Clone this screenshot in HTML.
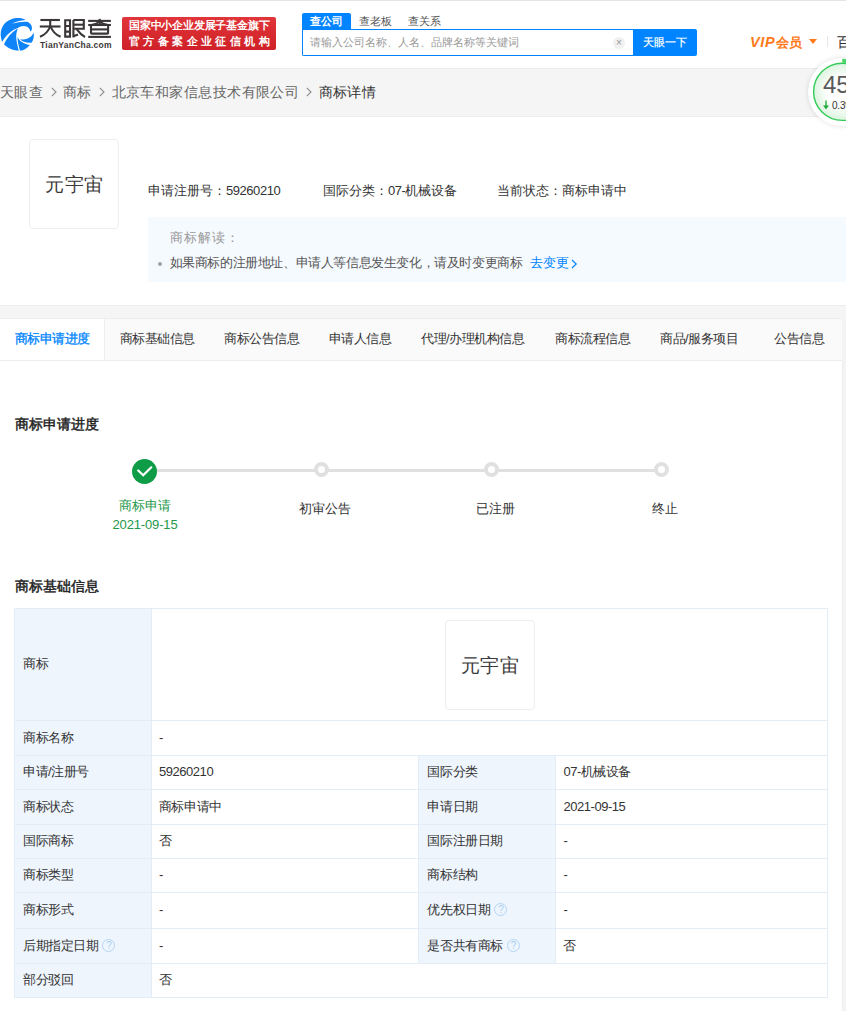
<!DOCTYPE html>
<html><head><meta charset="utf-8">
<style>
*{margin:0;padding:0;box-sizing:border-box}
html,body{width:846px;height:1011px;overflow:hidden;background:#fff}
body{font-family:"Liberation Sans",sans-serif;color:#333;position:relative}
.abs{position:absolute;white-space:nowrap}
#topline{position:absolute;left:0;top:0;width:846px;height:1px;background:#e4e4e4}
#crumb{position:absolute;left:0;top:68px;width:846px;height:49px;background:#f5f5f5;border-top:1px solid #ececec;border-bottom:1px solid #ececec}
#gap{position:absolute;left:0;top:305px;width:846px;height:13px;background:#f5f5f5;border-top:1px solid #ececec}

#tbl td{border:1px solid #e2edf7;padding:0 0 1px 8px;vertical-align:middle;line-height:16px;letter-spacing:-0.45px}
#tbl td.v{padding-left:7px}
#tbl td.l{background:#eef5fd}
#tbl i.q{display:inline-block;width:13px;height:13px;border:1px solid #b5d5f3;border-radius:50%;color:#a9cdf0;font-style:normal;font-size:10px;line-height:11px;text-align:center;vertical-align:1px;margin-left:1px;letter-spacing:0}
.tab{color:#333}
.d{letter-spacing:-0.45px}
</style></head><body>
<div id="topline"></div>

<!-- logo -->
<svg class="abs" style="left:0;top:15px" width="36" height="38" viewBox="0 0 846 893">
  <g fill="#0f84f8">
  <path d="M55,630 C0,520 -10,330 110,200 C230,70 470,30 600,118 C480,128 350,160 280,205 C400,170 540,150 640,160 C720,190 770,270 745,345 C737,368 725,380 712,385 C705,320 650,262 560,258 C505,256 465,275 430,298 C290,350 140,460 55,630 Z"/>
  <path d="M95,685 C170,520 290,390 420,318 C392,385 375,470 382,545 C392,660 422,760 440,840 C330,830 180,790 95,685 Z"/>
  <path d="M412,505 C440,600 540,675 700,705 C640,785 560,830 472,842 C440,740 410,620 412,505 Z"/>
  <path d="M470,565 C580,600 720,560 792,420 C805,510 785,600 740,652 C620,660 520,630 470,565 Z"/>
  </g>
</svg>
<svg class="abs" id="logotxt" style="left:0;top:0" width="120" height="45" viewBox="0 0 120 45">
<g fill="none" stroke="#3b3637" stroke-width="2.1" stroke-linecap="butt">
<path d="M40.4,20 H59.9"/>
<path d="M39.8,26.5 H60.5"/>
<path d="M50.2,20 V26.5"/>
<path d="M50.2,26.5 C48.5,31 45,34.8 40,36.8"/>
<path d="M50.6,26.5 C52.3,31 55.5,34.8 60.6,36.8"/>
<path d="M65.2,20.2 H70 V36.6 H65.2 Z"/>
<path d="M65.2,26 H70 M65.2,31.6 H70"/>
<path d="M73.4,20 V37.4"/>
<path d="M73.4,20 H83.8 V28.8 H73.4"/>
<path d="M73.4,24.7 H83.8"/>
<path d="M76.6,29.2 C78.8,32.2 81.2,35 85,37"/>
<path d="M73.4,36.2 L78,34.4"/>
<path d="M88.2,20.9 H110.9"/>
<path d="M88.2,25 H110.9"/>
<path d="M99.7,18.8 V24.7"/>
<path d="M99.7,21.5 C97.5,23.5 94,24.5 91.5,25"/>
<path d="M99.7,21.5 C101.9,23.5 105.4,24.5 108,25"/>
<path d="M91,25 V32.8 Q91,33.6 92,33.6 H107.2 Q108.1,33.6 108.1,32.8 V25"/>
<path d="M91,29.4 H108.1"/>
<path d="M88.2,36.9 H110.9"/>
</g>
</svg>
<div class="abs" style="left:40px;top:40px;font-size:8.5px;line-height:10px;color:#3b3838;font-weight:bold;letter-spacing:0.25px">TianYanCha.com</div>

<!-- red badge -->
<div class="abs" style="left:122px;top:17px;width:154px;height:33px;background:linear-gradient(#e0353a,#cf2127);border-radius:2px;color:#fff;font-size:11px;line-height:15px;font-weight:bold">
  <div style="position:absolute;left:7px;top:1px;letter-spacing:-0.2px">国家中小企业发展子基金旗下</div>
  <div style="position:absolute;left:7px;top:17px;letter-spacing:3.4px">官方备案企业征信机构</div>
</div>
<!-- search -->
<div class="abs" style="left:302px;top:13px;width:49px;height:17px;background:#0084ff;border-radius:2px 2px 0 0;color:#fff;font-size:11px;line-height:17px;text-align:center;font-weight:bold">查公司</div>
<div class="abs" style="left:359px;top:13px;font-size:11px;line-height:17px;color:#555">查老板</div>
<div class="abs" style="left:408px;top:13px;font-size:11px;line-height:17px;color:#555">查关系</div>
<div class="abs" style="left:302px;top:29px;width:332px;height:27px;border:1.5px solid #0084ff;border-right:none;border-radius:0 0 0 2px;background:#fff"></div>
<div class="abs" style="left:310px;top:34px;font-size:11px;line-height:16px;color:#999">请输入公司名称、人名、品牌名称等关键词</div>
<div class="abs" style="left:613px;top:36.5px;width:12px;height:12px;border-radius:50%;background:#f1f1f1;color:#999;font-size:10px;line-height:12px;text-align:center">×</div>
<div class="abs" style="left:633px;top:29px;width:64px;height:27px;background:#0084ff;border-radius:0 2px 2px 0;color:#fff;font-size:11px;line-height:27px;text-align:center;-webkit-text-stroke:0.2px #fff">天眼一下</div>

<!-- VIP -->
<div class="abs" style="left:750px;top:33px;font-size:14.5px;line-height:18px;color:#ff7a1a;font-weight:bold"><span style="font-style:italic;letter-spacing:0.6px;margin-right:1px">VIP</span><span style="font-size:13px">会员</span></div>
<div class="abs" style="left:809px;top:39px;width:0;height:0;border-left:4px solid transparent;border-right:4px solid transparent;border-top:5px solid #ff7a1a"></div>
<div class="abs" style="left:827px;top:36px;width:1px;height:11px;background:#e6e6e6"></div>
<div class="abs" style="left:837px;top:33px;font-size:14px;line-height:18px;color:#333">百</div>

<!-- breadcrumb -->
<div id="crumb"></div>
<div class="abs" style="left:0;top:83px;font-size:14px;letter-spacing:0.45px;line-height:18px;color:#666">天眼查</div>
<svg class="abs" style="left:50.5px;top:87px" width="6" height="10" viewBox="0 0 6 10"><path d="M0.8,0.8 L5,5 L0.8,9.2" fill="none" stroke="#8c8c8c" stroke-width="1.1"/></svg>
<div class="abs" style="left:62.5px;top:83px;font-size:14px;letter-spacing:0.45px;line-height:18px;color:#666">商标</div>
<svg class="abs" style="left:98.8px;top:87px" width="6" height="10" viewBox="0 0 6 10"><path d="M0.8,0.8 L5,5 L0.8,9.2" fill="none" stroke="#8c8c8c" stroke-width="1.1"/></svg>
<div class="abs" style="left:111.5px;top:83px;font-size:14px;letter-spacing:0.45px;line-height:18px;color:#666">北京车和家信息技术有限公司</div>
<svg class="abs" style="left:305.8px;top:87px" width="6" height="10" viewBox="0 0 6 10"><path d="M0.8,0.8 L5,5 L0.8,9.2" fill="none" stroke="#8c8c8c" stroke-width="1.1"/></svg>
<div class="abs" style="left:318.5px;top:83px;font-size:14px;letter-spacing:0.45px;line-height:18px;color:#333">商标详情</div>


<!-- score widget -->
<div class="abs" style="left:808px;top:58px;width:68px;height:68px;border-radius:50%;background:#fff;box-shadow:0 0 5px rgba(0,0,0,0.13)"></div>
<svg class="abs" style="left:808px;top:58px" width="68" height="68" viewBox="0 0 68 68">
  <defs><radialGradient id="rg" cx="50%" cy="50%" r="50%"><stop offset="0.5" stop-color="#ffffff"/><stop offset="1" stop-color="#dcf4df"/></radialGradient></defs>
  <circle cx="34.2" cy="33.8" r="28.6" fill="url(#rg)" stroke="#33cc5a" stroke-width="1.4"/>
  <path d="M34.2,2.8 A31,31 0 0 1 40,3.3" fill="none" stroke="#4fd66b" stroke-width="4"/>
</svg>
<div class="abs" style="left:823px;top:72px;font-size:24px;line-height:26px;color:#5a5a5a">45</div>
<svg class="abs" style="left:822px;top:100px" width="8" height="10" viewBox="0 0 8 10"><path d="M4,0.5 V8.5" stroke="#1aab3a" stroke-width="1.3"/><path d="M1,5.5 L4,9.3 L7,5.5 Z" fill="#1aab3a"/></svg>
<div class="abs" style="left:832px;top:100px;font-size:10px;line-height:12px;color:#333;letter-spacing:-0.2px">0.3%</div>

<!-- trademark header -->
<div class="abs" style="left:29px;top:139px;width:90px;height:90px;border:1px solid #eee;border-radius:4px;font-family:'Liberation Serif',serif;font-size:19px;line-height:90px;text-align:center;color:#3a3a3a;letter-spacing:0.5px;padding-left:0.5px">元宇宙</div>
<div class="abs" style="left:148px;top:183px;font-size:13px;line-height:16px;color:#333">申请注册号：<span class="d">59260210</span></div>
<div class="abs" style="left:323px;top:183px;font-size:13px;line-height:16px;color:#333">国际分类：<span class="d">07-</span>机械设备</div>
<div class="abs" style="left:497px;top:183px;font-size:13px;line-height:16px;color:#333">当前状态：商标申请中</div>
<div class="abs" style="left:148px;top:217px;width:698px;height:65px;background:#f5faff"></div>
<div class="abs" style="left:170px;top:230px;font-size:13px;line-height:16px;color:#999;letter-spacing:1.1px">商标解读：</div>
<div class="abs" style="left:158px;top:262px;width:4px;height:4px;border-radius:50%;background:#a0a0a0"></div>
<div class="abs" style="left:169.5px;top:255px;font-size:13px;line-height:16px;color:#555;letter-spacing:-0.4px">如果商标的注册地址、申请人等信息发生变化，请及时变更商标</div>
<div class="abs" style="left:530px;top:255px;font-size:13px;line-height:16px;color:#0084ff">去变更</div>
<svg class="abs" style="left:570.5px;top:259px" width="7" height="10" viewBox="0 0 7 10"><path d="M1,1 L5.2,5 L1,9" fill="none" stroke="#0084ff" stroke-width="1.2"/></svg>

<div id="gap"></div>


<!-- tabs -->
<div class="abs" style="left:0;top:318px;width:843px;height:43px;background:#fafafa;border-top:1px solid #ededed;border-bottom:1px solid #ededed;border-right:1px solid #eee"></div>
<div class="abs" style="left:0;top:319px;width:105px;height:41px;background:#fff;border-right:1px solid #eee"></div>
<div id="pagebg" class="abs" style="left:842px;top:318px;width:4px;height:693px;background:#f4f4f4"></div>
<div class="abs" style="left:0;top:361px;width:843px;height:650px;background:#fff;border-right:1px solid #eee"></div>
<div class="abs tab" style="left:14.5px;top:331px;font-size:13px;line-height:16px;letter-spacing:-0.45px;color:#0084ff;-webkit-text-stroke:0.3px #0084ff">商标申请进度</div>
<div class="abs tab" style="left:119.5px;top:331px;font-size:13px;line-height:16px;letter-spacing:-0.45px">商标基础信息</div>
<div class="abs tab" style="left:224px;top:331px;font-size:13px;line-height:16px;letter-spacing:-0.45px">商标公告信息</div>
<div class="abs tab" style="left:328.5px;top:331px;font-size:13px;line-height:16px;letter-spacing:-0.45px">申请人信息</div>
<div class="abs tab" style="left:421px;top:331px;font-size:13px;line-height:16px;letter-spacing:-0.45px">代理/办理机构信息</div>
<div class="abs tab" style="left:555px;top:331px;font-size:13px;line-height:16px;letter-spacing:-0.45px">商标流程信息</div>
<div class="abs tab" style="left:660px;top:331px;font-size:13px;line-height:16px;letter-spacing:-0.45px">商品/服务项目</div>
<div class="abs tab" style="left:774px;top:331px;font-size:13px;line-height:16px;letter-spacing:-0.45px">公告信息</div>

<!-- progress -->
<div class="abs" style="left:15px;top:415.5px;font-size:14px;line-height:17px;color:#222;-webkit-text-stroke:0.45px #222">商标申请进度</div>
<div class="abs" style="left:145px;top:469px;width:515px;height:3px;background:#e0e0e0"></div>
<div class="abs" style="left:131.5px;top:458.8px;width:25.6px;height:25.6px;border-radius:50%;background:#0e9c47"></div>
<svg class="abs" style="left:131.5px;top:458.8px" width="26" height="26" viewBox="0 0 26 26"><path d="M6.2,11.5 L11.2,16.3 L19.3,8.3" fill="none" stroke="#fff" stroke-width="2.2" stroke-linecap="round" stroke-linejoin="miter"/></svg>
<div class="abs" style="left:313.5px;top:462px;width:15px;height:15px;border-radius:50%;background:#fff;border:4.2px solid #e0e0e0"></div>
<div class="abs" style="left:483.5px;top:462px;width:15px;height:15px;border-radius:50%;background:#fff;border:4.2px solid #e0e0e0"></div>
<div class="abs" style="left:653.5px;top:462px;width:15px;height:15px;border-radius:50%;background:#fff;border:4.2px solid #e0e0e0"></div>
<div class="abs" style="left:95px;top:496px;width:100px;text-align:center;font-size:13px;line-height:19px;color:#23994a">商标申请<br><span style="letter-spacing:-0.15px">2021-09-15</span></div>
<div class="abs" style="left:275px;top:501px;width:100px;text-align:center;font-size:13px;line-height:16px;color:#333">初审公告</div>
<div class="abs" style="left:445px;top:501px;width:100px;text-align:center;font-size:13px;line-height:16px;color:#333">已注册</div>
<div class="abs" style="left:615px;top:501px;width:100px;text-align:center;font-size:13px;line-height:16px;color:#333">终止</div>

<div class="abs" style="left:15px;top:578px;font-size:14px;line-height:17px;color:#222;-webkit-text-stroke:0.45px #222">商标基础信息</div>

<!-- table -->
<table id="tbl" class="abs" style="left:14px;top:608px;width:814px;border-collapse:collapse;font-size:13px;color:#333">
<colgroup><col style="width:137px"><col style="width:268px"><col style="width:137px"><col style="width:272px"></colgroup>
<tr style="height:112px"><td class="l">商标</td><td colspan="3" class="v" style="position:relative"><div style="position:absolute;left:293px;top:11px;width:90px;height:90px;border:1px solid #eee;border-radius:4px;font-size:19px;line-height:90px;text-align:center;letter-spacing:0.5px;padding-left:0.5px;color:#3a3a3a">元宇宙</div></td></tr>
<tr style="height:35px"><td class="l">商标名称</td><td colspan="3" class="v">-</td></tr>
<tr style="height:34px"><td class="l">申请/注册号</td><td class="v">59260210</td><td class="l">国际分类</td><td class="v">07-机械设备</td></tr>
<tr style="height:35px"><td class="l">商标状态</td><td class="v">商标申请中</td><td class="l">申请日期</td><td class="v">2021-09-15</td></tr>
<tr style="height:34px"><td class="l">国际商标</td><td class="v">否</td><td class="l">国际注册日期</td><td class="v">-</td></tr>
<tr style="height:34px"><td class="l">商标类型</td><td class="v">-</td><td class="l">商标结构</td><td class="v">-</td></tr>
<tr style="height:36px"><td class="l">商标形式</td><td class="v">-</td><td class="l">优先权日期 <i class="q">?</i></td><td class="v">-</td></tr>
<tr style="height:35px"><td class="l">后期指定日期 <i class="q">?</i></td><td class="v">-</td><td class="l">是否共有商标 <i class="q">?</i></td><td class="v">否</td></tr>
<tr style="height:34px"><td class="l">部分驳回</td><td colspan="3" class="v">否</td></tr>
</table>
</body></html>
